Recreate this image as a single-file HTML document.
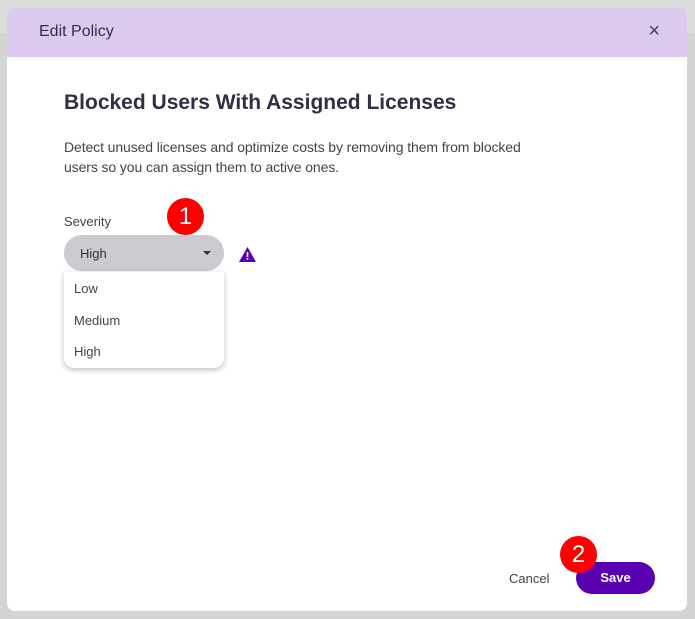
<!DOCTYPE html><html><head><style>
body{margin:0;width:695px;height:619px;background:#d4d4d4;font-family:"Liberation Sans",sans-serif;position:relative;overflow:hidden;color:#33334a}
.bgtop{position:absolute;left:0;top:0;width:695px;height:33px;background:#dcdcdc}
.modal{position:absolute;left:7px;top:8px;width:680px;height:603px;background:#fff;border-radius:8px;overflow:hidden}
.hdr{height:49px;background:#dccbee;position:relative}
.hdr .t{position:absolute;left:32px;top:15px;font-size:16px;color:#2f2f45}
.x{position:absolute;right:27px;top:12px;font-size:20px;color:#444;font-weight:normal}
h1{position:absolute;left:57px;top:83px;margin:0;font-size:21px;font-weight:bold;color:#2f2f45}
.d{position:absolute;left:57px;top:129px;font-size:14px;line-height:20px;color:#444;letter-spacing:-0.1px}
.sev{position:absolute;left:57px;top:206px;font-size:13px;color:#444}
.sel{position:absolute;left:57px;top:227px;width:160px;height:36px;border-radius:18px;background:#cbcbd0}
.sel span{position:absolute;left:16px;top:11px;font-size:13px;color:#333}
.car{position:absolute;left:139px;top:16px;width:0;height:0;border-left:4px solid transparent;border-right:4px solid transparent;border-top:4px solid #333}
.menu{position:absolute;left:57px;top:264px;width:160px;height:96px;background:#fff;border-radius:0 0 10px 10px;box-shadow:0 2px 6px rgba(0,0,0,.25)}
.menu div{position:absolute;left:10px;font-size:13px;color:#444}
.badge{position:absolute;background:#f00;color:#fff;font-size:24px;text-align:center;border-radius:50%}
.cancel{position:absolute;left:502px;top:563px;font-size:13px;color:#444}
.save{position:absolute;left:569px;top:554px;width:79px;height:32px;border-radius:16px;background:#5a00b0;color:#fff;font-weight:bold;font-size:13px;text-align:center;line-height:32px}
</style></head><body>
<div class="bgtop"></div>
<div class="modal">
<div class="hdr"><div class="t">Edit Policy</div><div class="x">×</div></div>
<h1>Blocked Users With Assigned Licenses</h1>
<div class="d">Detect unused licenses and optimize costs by removing them from blocked<br>users so you can assign them to active ones.</div>
<div class="sev">Severity</div>
<div class="sel"><span>High</span><div class="car"></div></div>
<svg style="position:absolute;left:232px;top:239px" width="17" height="15" viewBox="0 0 17 15"><path d="M8.5 0L17 15H0Z" fill="#5a00b0"/><rect x="7.7" y="5" width="1.6" height="5" fill="#fff"/><rect x="7.7" y="11" width="1.6" height="1.6" fill="#fff"/></svg>
<div class="menu"><div style="top:9px">Low</div><div style="top:41px">Medium</div><div style="top:72px">High</div></div>
<div class="cancel">Cancel</div>
<div class="save">Save</div>
</div>
<div class="badge" style="left:167px;top:198px;width:37px;height:37px;line-height:37px">1</div>
<div class="badge" style="left:560px;top:536px;width:37px;height:37px;line-height:37px">2</div>
</body></html>
